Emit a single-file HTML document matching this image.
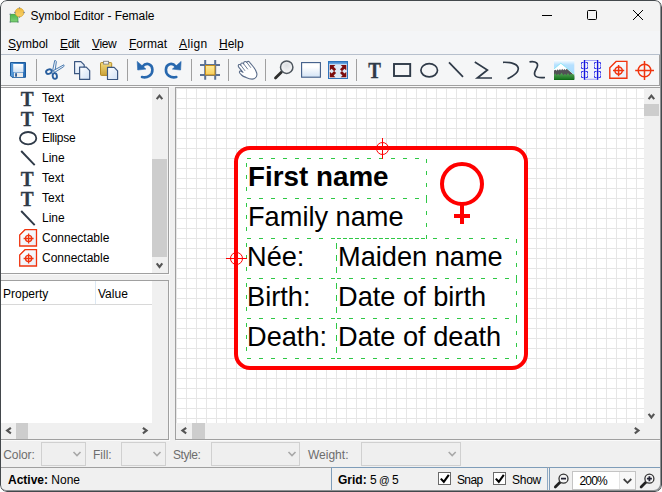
<!DOCTYPE html>
<html>
<head>
<meta charset="utf-8">
<title>Symbol Editor - Female</title>
<style>
html,body{margin:0;padding:0;background:#fff;}
body{width:662px;height:492px;overflow:hidden;position:relative;font-family:"Liberation Sans",sans-serif;font-size:12px;color:#000;}
.abs{position:absolute;}
#win{position:absolute;left:0;top:0;width:662px;height:492px;border-radius:7px;background:#f0f0f0;overflow:hidden;}
#frame{position:absolute;left:0;top:0;width:662px;height:492px;box-sizing:border-box;border:1px solid #43484c;border-radius:7px;z-index:50;box-shadow:inset -1px -1px 0 0 #8e9092;}
#titlebar{left:0;top:0;width:662px;height:31px;background:#f3f3f3;}
#menubar{left:0;top:31px;width:662px;height:23px;background:#f4f5f7;border-bottom:1px solid #b7c0cd;}
#toolbar{left:0;top:55px;width:660px;height:31px;box-sizing:border-box;background:#f5f6f7;border-bottom:1px solid #a0a0a0;border-right:1px solid #a0a0a0;box-shadow:0 1px 0 #f9f9f9;}
.t{position:absolute;white-space:nowrap;line-height:16px;height:16px;}
.menu u{text-decoration:underline;text-underline-offset:1px;}
.sep{position:absolute;top:6px;width:1px;height:20px;background:#b5b5b5;}
.dis{color:#6d6d6d;}
.cb{width:13px;height:13px;box-sizing:border-box;border:1px solid #6a6a6a;background:#fff;}
.combo{position:absolute;box-sizing:border-box;border:1px solid #d0d0d0;background:#efefef;}
.panel{position:absolute;box-sizing:border-box;border:1px solid #a0a0a0;background:#fff;overflow:hidden;box-shadow:1px 1px 0 #fafafa;}
svg{position:absolute;overflow:visible;}
.li{position:absolute;left:41px;font-size:12px;line-height:16px;white-space:nowrap;}
</style>
</head>
<body>
<div id="win">
  <div id="frame"></div>
  <div id="titlebar" class="abs">
    <svg id="appicon" style="left:0;top:0" width="32" height="31" viewBox="0 0 32 31">
      <defs>
        <linearGradient id="gsq" x1="0" y1="0" x2="0" y2="1"><stop offset="0" stop-color="#4fb54c"/><stop offset="1" stop-color="#7fd07a"/></linearGradient>
        <linearGradient id="gci" x1="0" y1="0" x2="0" y2="1"><stop offset="0" stop-color="#eeb93c"/><stop offset="1" stop-color="#f6d06c"/></linearGradient>
      </defs>
      <rect x="10.300" y="14.300" width="7.600" height="7.600" fill="url(#gsq)" stroke="#3f9f3d" stroke-width="0.800"/>
      <g fill="#6a7896"><circle cx="10.200" cy="14.200" r="0.700"/><circle cx="18" cy="22" r="0.700"/><circle cx="10.200" cy="22" r="0.700"/></g>
      <circle cx="19.500" cy="12.500" r="4.300" fill="url(#gci)" stroke="#dca62a" stroke-width="0.800"/>
      <g fill="#6a7896"><circle cx="19.500" cy="7.900" r="0.700"/><circle cx="24.100" cy="12.500" r="0.700"/><circle cx="19.500" cy="17.100" r="0.700"/><circle cx="14.900" cy="12.500" r="0.700"/></g>
    </svg>
    <div class="t" style="left:30.500px;top:7.800px;letter-spacing:-0.070px;">Symbol Editor - Female</div>
    <svg style="left:541px;top:9px" width="12" height="12" viewBox="0 0 12 12"><path d="M1 6.5H11" stroke="#000" stroke-width="1" fill="none"/></svg>
    <svg style="left:586px;top:9px" width="12" height="12" viewBox="0 0 12 12"><rect x="1.5" y="1.5" width="9" height="9" rx="1" stroke="#000" stroke-width="1" fill="none"/></svg>
    <svg style="left:632px;top:9px" width="12" height="12" viewBox="0 0 12 12"><path d="M1 1L11 11M11 1L1 11" stroke="#000" stroke-width="1" fill="none"/></svg>
  </div>
  <div id="menubar" class="abs menu">
    <div class="t" style="left:8px;top:5px;"><u>S</u>ymbol</div>
    <div class="t" style="left:60px;top:5px;letter-spacing:-0.350px;"><u>E</u>dit</div>
    <div class="t" style="left:92px;top:5px;letter-spacing:-0.400px;"><u>V</u>iew</div>
    <div class="t" style="left:129px;top:5px;"><u>F</u>ormat</div>
    <div class="t" style="left:179px;top:5px;letter-spacing:0.400px;"><u>A</u>lign</div>
    <div class="t" style="left:219px;top:5px;"><u>H</u>elp</div>
  </div>
  <div id="toolbar" class="abs">
    <svg style="left:0;top:0" width="662" height="30" viewBox="0 55 662 30">
      <defs>
        <linearGradient id="gpage" x1="0" y1="0" x2="1" y2="1"><stop offset="0" stop-color="#ffffff"/><stop offset="1" stop-color="#cfe0f5"/></linearGradient>
        <linearGradient id="gsky" x1="0" y1="0" x2="0" y2="1"><stop offset="0" stop-color="#7fc4f0"/><stop offset="1" stop-color="#d5ecfa"/></linearGradient>
        <linearGradient id="gclip" x1="0" y1="0" x2="0" y2="1"><stop offset="0" stop-color="#f3da7c"/><stop offset="1" stop-color="#caa23a"/></linearGradient>
      </defs>
      <!-- separators -->
      <g fill="#a0a0a0">
        <rect x="36" y="59" width="1" height="22"/><rect x="127" y="59" width="1" height="22"/><rect x="191" y="59" width="1" height="22"/><rect x="228" y="59" width="1" height="22"/><rect x="265" y="59" width="1" height="22"/><rect x="356" y="59" width="1" height="22"/>
      </g>
      <!-- save -->
      <g>
        <defs>
          <linearGradient id="gsave" x1="0" y1="0" x2="1" y2="0"><stop offset="0" stop-color="#5a9bd8"/><stop offset="1" stop-color="#2a6fb8"/></linearGradient>
          <linearGradient id="glabel" x1="0" y1="0" x2="0" y2="1"><stop offset="0" stop-color="#ffffff"/><stop offset="1" stop-color="#d4e3f3"/></linearGradient>
        </defs>
        <path d="M10.500 62.500h15v14.800h-13.500l-1.500 -1.500z" fill="url(#gsave)" stroke="#1c5a9c" stroke-width="1"/>
        <rect x="13.200" y="64" width="10.200" height="8" fill="url(#glabel)"/>
        <rect x="14" y="72.600" width="9" height="4.400" fill="#ececec"/>
        <rect x="15.200" y="73.200" width="1.700" height="3.500" fill="#1d4f8e"/>
      </g>
      <!-- scissors -->
      <g>
        <path d="M52.600 70.500L54.700 60.500C55.800 60.400 56.400 61 56.300 62L55 71.500z" fill="#eef2f7" stroke="#3a6ea8" stroke-width="0.900" stroke-linejoin="round"/>
        <path d="M53.500 70.500L63.800 64.800C64.300 65.800 64 66.600 63.200 67L54.500 72.500z" fill="#eef2f7" stroke="#3a6ea8" stroke-width="0.900" stroke-linejoin="round"/>
        <g fill="none" stroke="#2a5f9e" stroke-width="1.900">
          <ellipse cx="48.900" cy="71.600" rx="2.900" ry="2.100" transform="rotate(-20 48.900 71.600)"/>
          <ellipse cx="54.800" cy="76" rx="2.100" ry="2.900" transform="rotate(-10 54.800 76)"/>
        </g>
      </g>
      <!-- copy -->
      <g stroke="#3a5680" stroke-width="1.200" fill="url(#gpage)" stroke-linejoin="round">
        <path d="M74.600 61.600h6.300l3.300 3.300v8.800h-9.600z"/>
        <path d="M79.600 67.200h6.700l3.400 3.400v8.800h-10.100z"/>
      </g>
      <!-- paste -->
      <g>
        <rect x="100.500" y="62.600" width="11.200" height="12.800" rx="0.800" fill="url(#gclip)" stroke="#b48a24"/>
        <rect x="103.600" y="61.300" width="5" height="2.800" fill="#f4f4f4" stroke="#808080" stroke-width="0.900"/>
        <path d="M107.500 67.400h6.700l3.400 3.400v8.700h-10.100z" fill="url(#gpage)" stroke="#3a5680" stroke-width="1.200" stroke-linejoin="round"/>
      </g>
      <!-- undo -->
      <g id="undo">
        <path d="M142 77.100C147.500 78.300 152.600 75.200 152.400 69.600C152.200 64.200 146.500 61.600 142.300 66.800" fill="none" stroke="#2868ae" stroke-width="2.600" stroke-linecap="round"/>
        <path d="M137.200 61.400l0.500 8.600l8.200 -0.900z" fill="#2868ae" stroke="#2868ae" stroke-width="0.600" stroke-linejoin="round"/>
      </g>
      <!-- redo -->
      <g transform="translate(318.300 0) scale(-1 1)">
        <path d="M142 77.100C147.500 78.300 152.600 75.200 152.400 69.600C152.200 64.200 146.500 61.600 142.300 66.800" fill="none" stroke="#2868ae" stroke-width="2.600" stroke-linecap="round"/>
        <path d="M137.200 61.400l0.500 8.600l8.200 -0.900z" fill="#2868ae" stroke="#2868ae" stroke-width="0.600" stroke-linejoin="round"/>
      </g>
      <!-- grid -->
      <g>
        <defs><linearGradient id="gyel" x1="0" y1="0" x2="0" y2="1"><stop offset="0" stop-color="#ffeb9a"/><stop offset="1" stop-color="#f9cf5c"/></linearGradient></defs>
        <path d="M205.200 60v19.800M215.200 60v19.800M200 65h20M200 75h20" stroke="#5b7194" stroke-width="2" fill="none"/>
        <rect x="205.500" y="65.500" width="9.400" height="9.400" fill="url(#gyel)" stroke="#c8901c" stroke-width="1"/>
      </g>
      <!-- hand -->
      <g fill="#ffffff" stroke="#5b6d8a" stroke-width="1.100" stroke-linejoin="round" stroke-linecap="round">
        <path d="M246 77.400C244 76.800 242.500 76 241.500 75C240.300 73.800 239.300 73 239.400 72.200C239.600 71 240.300 70.800 241 71.200L243 72.300L238.700 67.200C238 66 238.200 65 239 64.600C239.700 64.300 240.300 64.600 240.800 65.200C240.600 64 241 63.200 241.800 63C242.600 62.800 243.200 63.200 243.600 63.800C243.500 62.500 244 61.700 245 61.500C245.800 61.400 246.400 61.800 246.800 62.400C247.200 61.500 248 61.200 248.800 61.600C249.500 62 249.900 62.600 250.300 63.200L253.500 67C255 69 256.200 71 256.700 73C257.300 75.300 256.500 77.500 254.500 78.600C252 79.900 248.500 78.600 246 77.400z"/>
        <path d="M240.800 65.200L244.800 70.500M243.600 63.800L247.600 69M246.800 62.400L250.600 67.400" fill="none" stroke-width="0.900"/>
      </g>
      <!-- magnifier -->
      <g>
        <defs><radialGradient id="glens" cx="0.500" cy="0.350" r="0.700"><stop offset="0" stop-color="#dcdfe2"/><stop offset="1" stop-color="#fbfbfb"/></radialGradient></defs>
        <path d="M281.300 72.300l-5.800 5.800" stroke="#2e2e2e" stroke-width="2.800" stroke-linecap="round" fill="none"/>
        <circle cx="286.700" cy="67.200" r="6.200" fill="url(#glens)" stroke="#4e565e" stroke-width="1.500"/>
      </g>
      <!-- zoom rect -->
      <defs><linearGradient id="gzr" x1="0" y1="0" x2="0" y2="1"><stop offset="0.300" stop-color="#ffffff"/><stop offset="1" stop-color="#d3e3f5"/></linearGradient>
      <linearGradient id="gfit" x1="0" y1="0" x2="0" y2="1"><stop offset="0" stop-color="#3d86cf"/><stop offset="1" stop-color="#7db3e6"/></linearGradient></defs>
      <rect x="301.600" y="62.600" width="18.800" height="14.600" fill="url(#gzr)" stroke="#3f5c88" stroke-width="1.100"/>
      <!-- fit -->
      <g>
        <rect x="328.500" y="61.500" width="19" height="17" fill="#dde9f6" stroke="#2f74bc" stroke-width="1"/>
        <rect x="329" y="62" width="18" height="2.300" fill="url(#gfit)"/>
        <g fill="#7c0d0d">
          <path d="M329.8 64.9L335.4 64.9L333.6 66.7L336.1 69.2L334.1 71.2L331.6 68.7L329.8 70.5z"/>
          <path d="M346.3 64.9L340.7 64.9L342.5 66.7L340.0 69.2L342.0 71.2L344.5 68.7L346.3 70.5z"/>
          <path d="M329.8 77.3L335.4 77.3L333.6 75.5L336.1 73.0L334.1 71.0L331.6 73.5L329.8 71.7z"/>
          <path d="M346.3 77.3L340.7 77.3L342.5 75.5L340.0 73.0L342.0 71.0L344.5 73.5L346.3 71.7z"/>
        </g>
      </g>
      <!-- T -->
      <text transform="translate(374.500 78) scale(0.850 1)" x="0" y="0" text-anchor="middle" font-family="Liberation Serif, serif" font-weight="bold" font-size="22.300" fill="#2f3a48" stroke="#2f3a48" stroke-width="0.350">T</text>
      <!-- rect -->
      <rect x="394" y="64" width="16.200" height="12" fill="none" stroke="#2f3a48" stroke-width="1.900"/>
      <!-- ellipse -->
      <ellipse cx="429.200" cy="70.300" rx="8.300" ry="6.600" fill="none" stroke="#2f3a48" stroke-width="1.700"/>
      <!-- line -->
      <path d="M449 62.300L463 76.800" stroke="#2f3a48" stroke-width="1.700" fill="none"/>
      <!-- polyline -->
      <path d="M474.800 62L487.400 70L477.300 78H492" stroke="#2f3a48" stroke-width="1.700" fill="none" stroke-linejoin="miter"/>
      <!-- arc -->
      <path d="M503 62.300C512 62 518.500 64.500 518.300 69C518 73.500 512.500 76.500 507.500 78.800" stroke="#2f3a48" stroke-width="1.700" fill="none"/>
      <!-- bezier -->
      <path d="M529.500 61.900C536 60.800 539.500 63.500 536.300 68.800C533 74.300 533.500 78.600 545 77.500" stroke="#2f3a48" stroke-width="1.700" fill="none"/>
      <!-- image -->
      <g>
        <defs>
          <linearGradient id="gsky2" x1="0" y1="0" x2="0" y2="1"><stop offset="0" stop-color="#ffffff"/><stop offset="0.250" stop-color="#b5e0ff"/><stop offset="1" stop-color="#a4d8ff"/></linearGradient>
          <linearGradient id="ggreen" x1="0" y1="0" x2="0" y2="1"><stop offset="0" stop-color="#5aa85c"/><stop offset="0.800" stop-color="#1f7a26"/><stop offset="1" stop-color="#0a6412"/></linearGradient>
        </defs>
        <rect x="554" y="60" width="20.300" height="20" fill="url(#gsky2)"/>
        <path d="M554 69L560.800 63.200L574.300 74V78H554z" fill="#ffffff"/>
        <path d="M554 69L560.800 63.200L574.300 74" fill="none" stroke="#6ee6f2" stroke-width="0.700"/>
        <path d="M554 70.600l1.500 -0.800l1 1l1.200 -1.500l1 1.300l1.300 -1.600l1 1.500l1.200 -1.800l1 1.600l1.300 -1.300l1 1.200l1.200 -1.500L572.300 73.500L574.300 76.500V79H554z" fill="#525256"/>
        <path d="M554 75l1.200 -1.800l1.500 2l1.500 -1.500l1.600 1.600l1.800 -2.600l1.800 2.600l1.600 -1.500l1.500 1.500l1.500 -2.200l1.500 2.200l1.500 -1.300L574.300 74.500V80H554z" fill="url(#ggreen)"/>
      </g>
      <!-- film / group -->
      <g fill="none" stroke="#2424e4" stroke-width="1.200">
        <rect x="584.500" y="60.400" width="13" height="18.800" fill="#f2f4fb" stroke="#8a90f0" stroke-width="0.800"/>
        <g stroke-dasharray="4 0.700 0.600 0.700" stroke-dashoffset="2" stroke="#3a3aea" stroke-width="1">
          <rect x="581.500" y="62.500" width="6" height="6"/><rect x="581.500" y="71.500" width="6" height="6"/>
          <rect x="594.500" y="62.500" width="6" height="6"/><rect x="594.500" y="71.500" width="6" height="6"/>
        </g>
        <path d="M584.500 60v19.700M597.600 60v19.700" stroke-width="1.400" stroke="#1414dc"/>
      </g>
      <!-- connectable -->
      <g fill="none" stroke="#f0340f" stroke-width="1.500">
        <defs><linearGradient id="gconn" x1="0" y1="0" x2="1" y2="1"><stop offset="0" stop-color="#ffffff"/><stop offset="1" stop-color="#e9eef8"/></linearGradient></defs>
        <path d="M609.800 67.700l6.300 -6.300h10.800v16.800h-17.100z" fill="url(#gconn)" stroke-width="1.400"/>
        <circle cx="618.600" cy="70.600" r="3.700"/>
        <path d="M618.600 65v11.200M613 70.600h11.200"/>
      </g>
      <!-- crosshair -->
      <g fill="none" stroke="#f0340f" stroke-width="1.500">
        <circle cx="644.500" cy="70.500" r="6.300"/>
        <path d="M644.500 61v19M635.200 70.500h18.800"/>
      </g>
    </svg>
  </div>

  <!-- left list panel -->
  <div class="panel" id="list" style="left:0px;top:87px;width:169px;height:187px;">
    <svg style="left:-1px;top:-1px" width="169" height="187" viewBox="0 87 169 187">
    <defs><linearGradient id="gconn2" x1="0" y1="0" x2="1" y2="1"><stop offset="0" stop-color="#ffffff"/><stop offset="1" stop-color="#e9eef8"/></linearGradient></defs>
<text transform="translate(27.300 105.6) scale(0.880 1)" text-anchor="middle" font-family="Liberation Serif, serif" font-weight="bold" font-size="22" fill="#2f3a48" stroke="#2f3a48" stroke-width="0.350">T</text>
<text transform="translate(27.300 125.6) scale(0.880 1)" text-anchor="middle" font-family="Liberation Serif, serif" font-weight="bold" font-size="22" fill="#2f3a48" stroke="#2f3a48" stroke-width="0.350">T</text>
<ellipse cx="28.100" cy="138.2" rx="8.200" ry="6.200" fill="none" stroke="#2f3a48" stroke-width="1.800"/>
<path d="M21.200 151L34.700 165.2" stroke="#2f3a48" stroke-width="1.900" fill="none"/>
<text transform="translate(27.300 185.6) scale(0.880 1)" text-anchor="middle" font-family="Liberation Serif, serif" font-weight="bold" font-size="22" fill="#2f3a48" stroke="#2f3a48" stroke-width="0.350">T</text>
<text transform="translate(27.300 205.6) scale(0.880 1)" text-anchor="middle" font-family="Liberation Serif, serif" font-weight="bold" font-size="22" fill="#2f3a48" stroke="#2f3a48" stroke-width="0.350">T</text>
<path d="M21.200 211L34.700 225.2" stroke="#2f3a48" stroke-width="1.900" fill="none"/>
<g fill="none" stroke="#f0340f" stroke-width="1.300"><path d="M19.700 235l5.300 -5.300h11.500v16.300h-16.800z" fill="url(#gconn2)"/><circle cx="28.600" cy="238.5" r="3.100"/><path d="M28.600 233.5v10M23.600 238.5h10"/></g>
<g fill="none" stroke="#f0340f" stroke-width="1.300"><path d="M19.700 255l5.300 -5.300h11.500v16.300h-16.800z" fill="url(#gconn2)"/><circle cx="28.600" cy="258.5" r="3.100"/><path d="M28.600 253.5v10M23.600 258.5h10"/></g>
    </svg>
<div class="li" style="top:2px;">Text</div>
<div class="li" style="top:22px;">Text</div>
<div class="li" style="top:42px;letter-spacing:-0.300px;">Ellipse</div>
<div class="li" style="top:62px;">Line</div>
<div class="li" style="top:82px;">Text</div>
<div class="li" style="top:102px;">Text</div>
<div class="li" style="top:122px;">Line</div>
<div class="li" style="top:142px;">Connectable</div>
<div class="li" style="top:162px;">Connectable</div>

    <div class="abs" style="left:151px;top:0;width:16px;height:185px;background:#f0f0f0;">
      <div class="abs" style="left:0;top:71px;width:15px;height:98px;background:#cdcdcd;"></div>
      <svg style="left:0;top:0" width="16" height="185" viewBox="0 0 16 185">
        <path d="M4.700 11.200L7.500 7.600L10.300 11.200" fill="none" stroke="#555555" stroke-width="2.100"/>
        <path d="M4.700 175.400L7.500 179L10.300 175.400" fill="none" stroke="#555555" stroke-width="2.100"/>
      </svg>
    </div>
  </div>
  <!-- property panel -->
  <div class="panel" id="props" style="left:0px;top:280px;width:169px;height:160px;">
    <div class="t" style="left:2px;top:5px;">Property</div>
    <div class="t" style="left:97px;top:5px;">Value</div>
    <div class="abs" style="left:94px;top:0px;width:1px;height:23px;background:#dce8f3;"></div>
    <div class="abs" style="left:0px;top:23px;width:151px;height:1px;background:#d8d8d8;"></div>
    <div class="abs" style="left:151px;top:0;width:16px;height:158px;background:#f0f0f0;"></div>
    <div class="abs" style="left:0;top:142px;width:167px;height:16px;background:#f0f0f0;">
      <div class="abs" style="left:15px;top:0;width:12px;height:16px;background:#cdcdcd;"></div>
      <svg style="left:0;top:0" width="167" height="16" viewBox="0 0 167 16">
        <path d="M9.900 4.800L6.100 7.600L9.900 10.400" fill="none" stroke="#555555" stroke-width="2.100"/>
        <path d="M141.900 4.800L145.600 7.600L141.900 10.400" fill="none" stroke="#555555" stroke-width="2.100"/>
      </svg>
    </div>
  </div>
  <!-- canvas -->
  <div class="panel" id="canvas" style="left:175px;top:87px;width:487px;height:353px;">
    <div class="abs" id="grid" style="left:0;top:0;width:468px;height:335px;background-color:#fff;background-image:linear-gradient(#e6e6e6 1px,transparent 1px),linear-gradient(90deg,#e6e6e6 1px,transparent 1px);background-size:10px 10px;"></div>
    <svg style="left:0;top:0" width="468" height="335" viewBox="176 88 468 335">
      <rect x="236" y="148" width="290" height="220" rx="14" ry="14" fill="#fff" stroke="#ff0000" stroke-width="4"/>
      <g fill="none" stroke="#2fc846" stroke-width="1" stroke-dasharray="4 8" shape-rendering="crispEdges"><rect x="246.5" y="158.5" width="180" height="40"/><rect x="246.5" y="198.5" width="180" height="40"/><rect x="246.5" y="238.5" width="90" height="40"/><rect x="336.5" y="238.5" width="180" height="40"/><rect x="246.5" y="278.5" width="90" height="40"/><rect x="336.5" y="278.5" width="180" height="40"/><rect x="246.5" y="318.5" width="90" height="40"/><rect x="336.5" y="318.5" width="180" height="40"/></g>
      <g font-family="Liberation Sans, sans-serif" font-size="27.200px" fill="#000">
        <text x="248" y="186" font-weight="bold" font-size="27.800px">First name</text>
        <text x="248" y="226">Family name</text>
        <text x="247" y="266">Née:</text>
        <text x="338" y="266">Maiden name</text>
        <text x="247" y="306">Birth:</text>
        <text x="338" y="306">Date of birth</text>
        <text x="247" y="346">Death:</text>
        <text x="338" y="346">Date of death</text>
      </g>
      <g fill="none" stroke="#ff0000" stroke-width="4">
        <circle cx="462" cy="184" r="20"/>
        <path d="M462 204V224M454 216H470"/>
      </g>
      <g fill="none" stroke="#ff0000" stroke-width="1">
        <circle cx="382.500" cy="148.500" r="6"/><path d="M382.500 138v21M372 148.500h21"/>
        <circle cx="236.500" cy="258.500" r="6"/><path d="M236.500 248v21M226 258.500h21"/>
      </g>
    </svg>
    <div class="abs" style="left:468px;top:0;width:17px;height:351px;background:#f0f0f0;">
      <div class="abs" style="left:0;top:16px;width:15px;height:12px;background:#cdcdcd;"></div>
      <svg style="left:0;top:0" width="16" height="335" viewBox="0 0 16 335">
        <path d="M4.600 11.200L7.400 7.600L10.200 11.200" fill="none" stroke="#555555" stroke-width="2.100"/>
        <path d="M4.600 325.900L7.400 329.500L10.200 325.900" fill="none" stroke="#555555" stroke-width="2.100"/>
      </svg>
    </div>
    <div class="abs" style="left:0;top:335px;width:468px;height:16px;background:#f0f0f0;">
      <div class="abs" style="left:16px;top:0;width:13px;height:16px;background:#cdcdcd;"></div>
      <svg style="left:0;top:0" width="468" height="16" viewBox="0 0 468 16">
        <path d="M10.200 4.800L6.400 7.600L10.200 10.400" fill="none" stroke="#555555" stroke-width="2.100"/>
        <path d="M458.800 4.800L462.500 7.600L458.800 10.400" fill="none" stroke="#555555" stroke-width="2.100"/>
      </svg>
    </div>
  </div>
  <!-- format bar -->
  <div id="formatbar" class="abs" style="left:0;top:440px;width:662px;height:27px;">
    <div class="t dis" style="left:3.300px;top:7px;letter-spacing:-0.100px;">Color:</div>
    <div class="combo" style="left:41px;top:2px;width:45px;height:24px;"></div>
    <div class="t dis" style="left:93px;top:7px;">Fill:</div>
    <div class="combo" style="left:121px;top:2px;width:45px;height:24px;"></div>
    <div class="t dis" style="left:173px;top:7px;letter-spacing:-0.450px;">Style:</div>
    <div class="combo" style="left:211px;top:2px;width:89px;height:24px;"></div>
    <div class="t dis" style="left:308px;top:7px;">Weight:</div>
    <div class="combo" style="left:361px;top:2px;width:100px;height:24px;"></div>
    <svg style="left:0;top:0" width="662" height="28" viewBox="0 0 662 28">
      <g fill="none" stroke="#a8a8a8" stroke-width="1.600">
        <path d="M73.500 12L77 15.500L80.500 12"/><path d="M153.500 12L157 15.500L160.500 12"/><path d="M288.500 12L292 15.500L295.500 12"/><path d="M448.700 12L452.200 15.500L455.700 12"/>
      </g>
    </svg>
  </div>
  <!-- status bar -->
  <div id="statusbar" class="abs" style="left:0;top:467px;width:662px;height:25px;border-top:1px solid #a0a0a0;box-sizing:border-box;">
    <div class="t" style="left:8px;top:4px;"><b>Active:</b> None</div>
    <div class="abs" style="left:331px;top:-1px;width:217px;height:25px;border-left:1px solid #7f9db9;border-top:1px solid #7f9db9;border-right:1px solid #8fa9c4;box-sizing:border-box;"></div>
    <div class="t" style="left:338px;top:4px;"><b>Grid:</b> <span style="letter-spacing:-0.500px;">5 <span style="font-size:10.500px;">@</span> 5</span></div>
    <div class="abs cb" style="left:438px;top:4px;"></div>
    <div class="t" style="left:457px;top:4px;letter-spacing:-0.650px;">Snap</div>
    <div class="abs cb" style="left:493px;top:4px;"></div>
    <div class="t" style="left:512px;top:4px;letter-spacing:-0.250px;">Show</div>
    <div class="abs" style="left:549px;top:-1px;width:113px;height:25px;border-left:1px solid #7f9db9;border-top:1px solid #7f9db9;box-sizing:border-box;"></div>
    <div class="abs" style="left:572px;top:3px;width:64px;height:19px;box-sizing:border-box;border:1px solid #c4c4c4;background:#fff;">
      <div class="abs" style="left:46px;top:0;width:16px;height:17px;background:#f8f8f8;border-left:1px solid #e4e4e4;box-sizing:border-box;"></div>
      <div class="t" style="left:6.500px;top:1px;letter-spacing:-0.850px;">200%</div>
    </div>
    <svg style="left:0;top:0" width="662" height="25" viewBox="0 467 662 25">
      <g fill="none" stroke="#000" stroke-width="2.100"><path d="M440.800 477.600l3 3.200l5 -7"/><path d="M495.800 477.600l3 3.200l5 -7"/></g>
      <path d="M623.700 478L627.500 481.800L631.300 478" fill="none" stroke="#404040" stroke-width="1.800"/>
      <g>
        <path d="M560 481.300l-4.700 4.700" stroke="#222" stroke-width="2.700" stroke-linecap="round"/>
        <circle cx="563.500" cy="477.700" r="4.500" fill="#f4f4f4" stroke="#333" stroke-width="1.300"/>
        <path d="M561 477.700h5" stroke="#223" stroke-width="1.800"/>
      </g>
      <g>
        <path d="M645.800 481.300l-4.700 4.700" stroke="#222" stroke-width="2.700" stroke-linecap="round"/>
        <circle cx="649.400" cy="477.700" r="4.500" fill="#f4f4f4" stroke="#333" stroke-width="1.300"/>
        <path d="M646.900 477.700h5M649.400 475.200v5" stroke="#223" stroke-width="1.800"/>
      </g>
    </svg>
  </div>
</div>
</body>
</html>
